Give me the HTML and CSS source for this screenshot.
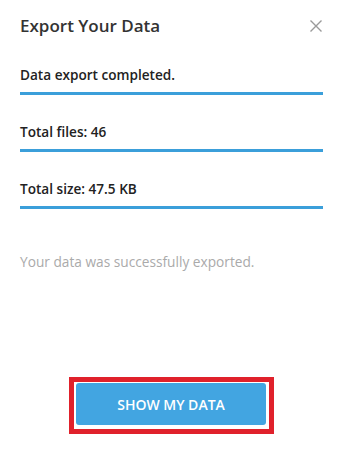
FILE: index.html
```html
<!DOCTYPE html>
<html lang="en">
<head>
<meta charset="utf-8">
<title>Export Your Data</title>
<link rel="stylesheet" href="styles.css">
</head>
<body>
<div class="dialog">
  <div class="header">
    <h1 class="title">Export Your Data</h1>
    <button class="close" aria-label="Close">
      <svg width="12" height="12" viewBox="0 0 12 12"><path d="M0.5 0.5L11.5 11.5M11.5 0.5L0.5 11.5" stroke="#9a9a9a" stroke-width="1.4" fill="none"/></svg>
    </button>
  </div>
  <div class="field">Data export completed.</div>
  <div class="field">Total files: 46</div>
  <div class="field">Total size: 47.5 KB</div>
  <p class="message">Your data was successfully exported.</p>
  <div class="actions">
    <span class="highlight"><button class="primary">SHOW MY DATA</button></span>
  </div>
</div>
</body>
</html>
```
FILE: styles.css
```css
html, body {
  margin: 0;
  padding: 0;
  background: #ffffff;
}
body {
  font-family: "Open Sans", "Liberation Sans", sans-serif;
  color: #222;
}
.dialog {
  padding: 14px 19px 0 20px;
}
.header {
  display: flex;
  justify-content: space-between;
  align-items: center;
  height: 24px;
}
.title {
  margin: 0;
  font-size: 17px;
  line-height: 24px;
  font-weight: 600;
  color: #333;
}
.close {
  border: 0;
  background: none;
  padding: 0;
  margin-right: 1px;
  width: 12px;
  height: 12px;
  display: flex;
}
.field {
  margin-top: 27px;
  font-size: 13.6px;
  line-height: 20px;
  font-weight: 600;
  color: #222;
  padding-bottom: 7px;
  border-bottom: 3px solid #3b9fda;
}
.message {
  margin: 43px 0 0;
  font-size: 13.7px;
  line-height: 20px;
  color: #aaaaaa;
}
.actions {
  margin-top: 105px;
  text-align: center;
}
.highlight {
  display: inline-block;
  border: 5px solid #e0212b;
  padding: 1px 3px 4px 2px;
  line-height: 0;
}
.primary {
  width: 190px;
  height: 42px;
  border: 0;
  border-radius: 3px;
  background: #42a5e1;
  color: #fff;
  font-family: "Open Sans", "Liberation Sans", sans-serif;
  font-size: 14px;
  font-weight: 600;
  padding: 0;
}
```
